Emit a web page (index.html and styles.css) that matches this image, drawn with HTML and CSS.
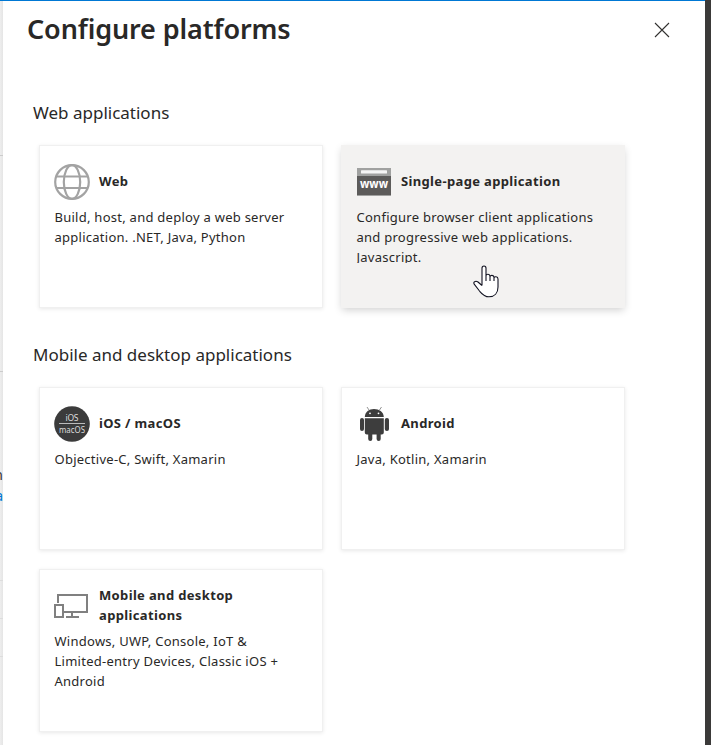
FILE: index.html
```html
<!DOCTYPE html>
<html lang="en">
<head>
<meta charset="utf-8">
<title>Configure platforms</title>
<link rel="stylesheet" href="styles.css">
</head>
<body>
<div class="shell">
  <div class="backdrop">
    <i class="rule rule-a"></i><i class="rule rule-b"></i>
    <span class="peek peek-text">n</span><span class="peek peek-link">a</span>
    <i class="rule rule-c"></i><i class="rule rule-d"></i><i class="rule rule-e"></i>
  </div>
  <main class="panel">
    <header class="head">
      <h1>Configure platforms</h1>
      <button class="close" aria-label="Close"><svg width="16" height="16" viewBox="0 0 16 16"><path d="M1 1 15 15M15 1 1 15" stroke="#323130" stroke-width="1.1" fill="none"/></svg></button>
    </header>
    <section class="group">
      <h2>Web applications</h2>
      <div class="cards">
        <article class="card">
          <div class="title">
            <svg class="icon" viewBox="0 0 36 36" fill="none" stroke="#a3a3a3" stroke-width="2.2"><circle cx="18" cy="18" r="16.8"/><ellipse cx="18" cy="18" rx="8.2" ry="16.8"/><path d="M3 12.5H33M3 24H33"/></svg>
            <h3>Web</h3>
          </div>
          <p>Build, host, and deploy a web server<br>application. .NET, Java, Python</p>
        </article>
        <article class="card hovered">
          <div class="title">
            <svg class="icon" viewBox="0 0 36 36"><path d="M1 4H35V12H1z" fill="#a0a1a0"/><rect x="5" y="6.2" width="26" height="3.4" rx=".6" fill="#f5f5f5"/><path d="M1 12H35V31H1z" fill="#5c5b5a"/><path d="M1 31H35V32H1z" fill="#a0a1a0"/><text class="www" x="18" y="24" text-anchor="middle" textLength="28" lengthAdjust="spacingAndGlyphs">www</text></svg>
            <h3>Single-page application</h3>
          </div>
          <p>Configure browser client applications<br>and progressive web applications.<br>Javascript.</p>
          <svg class="pointer" width="26" height="33" viewBox="0 0 26 33"><path d="M9 20.5V3.2C9 .3 13 .3 13 3.2V13.5V11C13 8.6 17 8.6 17 11.4V14V12C17 9.6 21 9.8 21 12.5V15V13.2C21 11.2 25 11.2 25 14V22C25 28 21.5 31.8 16 31.8C11 31.8 9 29 6.5 26L1.2 19.2C-.2 17 2.5 15.4 5 17L9 20.5M13 11V16M17 12V16M21 13V16" fill="#fff" stroke="#111221" stroke-width="1.1" stroke-linejoin="round"/></svg>
        </article>
      </div>
    </section>
    <section class="group">
      <h2>Mobile and desktop applications</h2>
      <div class="cards">
        <article class="card">
          <div class="title">
            <svg class="icon" viewBox="0 0 36 36"><circle cx="18" cy="18" r="17.8" fill="#3b3b3b"/><path d="M5 17.5H31" stroke="#bbb"/><text class="os" x="18" y="15" text-anchor="middle" textLength="13">iOS</text><text class="os" x="18" y="26.500" text-anchor="middle" textLength="26" lengthAdjust="spacingAndGlyphs">macOS</text></svg>
            <h3>iOS / macOS</h3>
          </div>
          <p>Objective-C, Swift, Xamarin</p>
        </article>
        <article class="card">
          <div class="title">
            <svg class="icon" viewBox="0 0 36 36" fill="#3d3d3d"><path d="M8.8 11C9 5.800 13 3 18 3S27.600 5.800 27.800 11z"/><path d="M13 4 11 1M23.500 4 25.500 1" stroke="#777" stroke-width=".8"/><circle cx="14" cy="7.300" r=".9" fill="#fff"/><circle cx="22.500" cy="7.300" r=".9" fill="#fff"/><path d="M8.800 12.300H27.800V26.500Q27.800 28.500 25.800 28.500H24.700V33Q24.700 35 22.700 35T20.600 33V28.500H16.300V33Q16.300 35 14.300 35T12.200 33V28.500H10.800Q8.800 28.500 8.800 26.500z"/><rect x="4" y="12" width="4" height="13" rx="2"/><rect x="28.800" y="12" width="4.200" height="13" rx="2"/></svg>
            <h3>Android</h3>
          </div>
          <p>Java, Kotlin, Xamarin</p>
        </article>
        <article class="card">
          <div class="title">
            <svg class="icon" viewBox="0 0 36 36" fill="none" stroke="#808080" stroke-width="2"><path d="M4 15V7H33V24H10M18 24V29M12 29H25"/><path d="M1 17H9V29H1z"/></svg>
            <h3>Mobile and desktop<br>applications</h3>
          </div>
          <p class="tall">Windows, UWP, Console, IoT &amp;<br>Limited-entry Devices, Classic iOS +<br>Android</p>
        </article>
      </div>
    </section>
  </main>
  <div class="edge"></div>
</div>
</body>
</html>
```
FILE: styles.css
```css
* { box-sizing: border-box; }
body { margin: 0; background: #fff; color: #292827; font-family: "Noto Sans", "Open Sans", sans-serif; overflow: hidden; }
h1, h2, h3, p { margin: 0; white-space: nowrap; }
.shell { display: grid; grid-template-columns: 3px 702px 6px; height: 745px; }
.backdrop { display: flex; flex-direction: column; overflow: hidden; background: linear-gradient(90deg, #eee, #e5e5e5); border-top: 1px solid #0078d4; }
.rule { height: 1px; background: #ccc; flex: none; }
.rule-a { margin-top: 154px; }
.rule-b { margin-top: 215px; }
.peek { display: flex; justify-content: flex-end; height: 20px; font-size: 14px; line-height: 20px; width: 3px; flex: none; }
.peek-text { margin-top: 93px; color: #333; }
.peek-link { color: #0078d4; margin-top: 1px; }
.rule-c { margin-top: 74px; background: #ddd; }
.rule-d { margin-top: 37px; background: #ddd; }
.rule-e { margin-top: 37px; background: #ddd; }
.panel { border-top: 1px solid #0078d4; padding-left: 24px; }
.edge { background: #3b3a39; }
.head { display: flex; justify-content: space-between; height: 92px; padding: 10px 35px 0 0; }
h1 { font-size: 27px; line-height: 36px; font-weight: 600; letter-spacing: -.12px; }
.close { width: 16px; height: 16px; padding: 0; margin-top: 11px; border: 0; background: none; display: flex; }
.group { padding-left: 6px; height: 242px; }
h2 { font-size: 17px; line-height: 39px; height: 40px; font-weight: 400; }
.cards { display: grid; grid-template-columns: 282px 282px; gap: 21px 20px; padding: 13px 0 0 7px; }
.card { height: 161px; padding: 16px 14px 0; background: #fff; box-shadow: 0 0 0 1px #f0f0f0, 0 1px 4px 1px #00000018; position: relative; }
.hovered { background: #f3f2f1; box-shadow: 0 0 0 1px #f3f2f1, 0 3px 8px #00000030; }
.title { display: flex; align-items: center; gap: 9px; height: 40px; }
.icon { width: 36px; height: 36px; flex: none; }
h3 { font-size: 13px; line-height: 20px; font-weight: 700; letter-spacing: .35px; position: relative; top: -1px; }
.card p { font-size: 13px; line-height: 20px; letter-spacing: .26px; height: 56px; margin: 5px 0 0 -4px; padding-left: 4.500px; overflow: hidden; }
.card .tall { height: 60px; }
.www { font: 700 13px "Noto Sans", sans-serif; fill: #fff; }
.os { font: 8.5px "Noto Sans", sans-serif; fill: #ddd; }
.pointer { position: absolute; left: 131px; top: 119px; }
```
